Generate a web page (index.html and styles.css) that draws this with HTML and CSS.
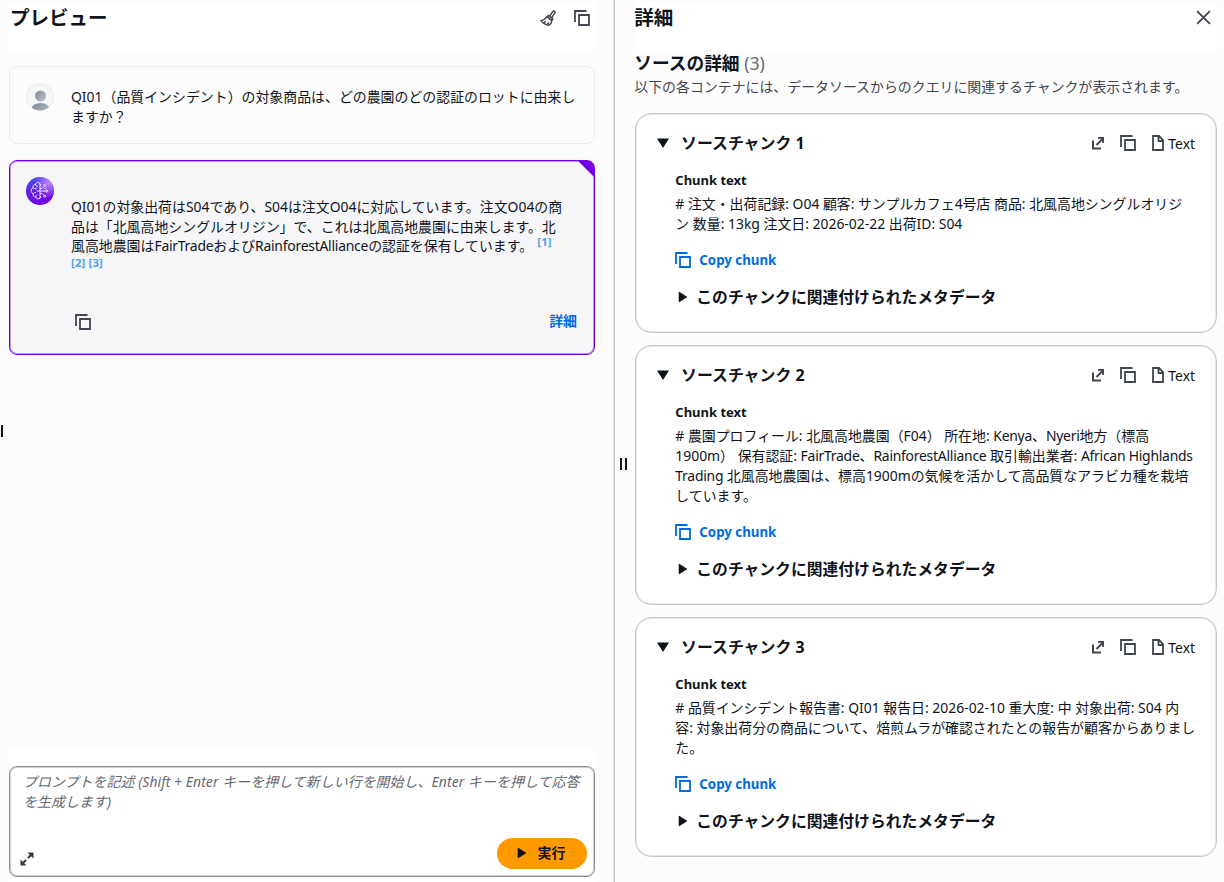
FILE: index.html
```html
<!DOCTYPE html>
<html lang="ja">

<head>
  <meta charset="UTF-8">
  <meta name="viewport" content="width=device-width, initial-scale=1.0">
  <title>プレビュー</title>
  <link rel="stylesheet" href="styles.css">
</head>

<body>
  <!-- 共通アイコン -->
  <svg class="sprite" width="0" height="0">
    <symbol id="copy" viewBox="0 0 16 16">
      <path d="M1 12V1h11.500M5 5h10v10H5z" />
    </symbol>
    <symbol id="external" viewBox="0 0 14 14">
      <path d="M2 4.500v8h8M5.500 9l5.500-5.500" />
      <path d="M7 1h6v6h-1.800V4.300L9.700 2.800H7z" fill="#424650" stroke="none" />
    </symbol>
    <symbol id="file" viewBox="0 0 16 16">
      <path d="M3 1h6l4 4v10H3zM8.500 1v5H13" />
    </symbol>
  </svg>

  <div class="page">
    <section class="preview">
      <header class="panel-head">
        <h1>プレビュー</h1>
        <div class="head-icons">
          <svg class="icon broom" viewBox="0 0 16 16">
            <path d="M14.600 1.300c-.6-.6-1.500-.3-1.900.3L9.600 6.300l2 1.500 3.200-4.900c.4-.6.4-1.200-.2-1.600zM8.500 5.500l4.300 3.200-.9 1.800-5-3.800zM6.900 6.700C5.500 9 3.800 10 1 10.700c1.600 2.500 4.300 4 8 4.500 1.800-1.100 2.700-2.500 2.900-4.700M4.200 12.800l1.600-1.500M7.300 14.500l1.500-2.200" />
          </svg>
          <svg class="icon"><use href="#copy" /></svg>
        </div>
      </header>

      <div class="chat">
        <div class="msg question">
          <svg class="avatar" viewBox="0 0 28 28">
            <defs>
              <linearGradient id="grey" x1="0" y1="0" x2="1" y2="1">
                <stop offset="0" stop-color="#7d8894" />
                <stop offset="1" stop-color="#bcc3ca" />
              </linearGradient>
              <clipPath id="round"><circle cx="14" cy="14" r="13.500" /></clipPath>
            </defs>
            <circle cx="14" cy="14" r="13.500" fill="#f5f6f7" stroke="#ebebf0" />
            <g clip-path="url(#round)" fill="url(#grey)">
              <circle cx="14.500" cy="13" r="5.500" />
              <ellipse cx="14.500" cy="26" rx="9" ry="6" />
            </g>
          </svg>
          <p class="text">
            <span class="line">QI01（品質インシデント）の対象商品は、どの農園のどの認証のロットに由来し</span>
            <span class="line">ますか？</span>
          </p>
        </div>

        <div class="msg answer">
          <svg class="avatar" viewBox="0 0 28 28">
            <defs>
              <linearGradient id="violet" x1="0.600" y1="1" x2="0.300" y2="0">
                <stop offset="0" stop-color="#7300e5" />
                <stop offset="0.400" stop-color="#6a10e5" />
                <stop offset="1" stop-color="#4a4cf0" />
              </linearGradient>
              <radialGradient id="shine" cx="0.850" cy="0.200" r="0.550">
                <stop offset="0" stop-color="#c08cf5" />
                <stop offset="1" stop-color="#c08cf5" stop-opacity="0" />
              </radialGradient>
            </defs>
            <circle cx="14" cy="14" r="14" fill="url(#violet)" />
            <circle cx="14" cy="14" r="14" fill="url(#shine)" />
            <g fill="none" stroke="#f4eaff" stroke-width="1">
              <path d="M14 6.500v15M14 6.500c-1.500-1.700-4-1-4.300.8-2 0-3.200 1.700-2.500 3.400-2.600 1-2.700 5 0 6-.4 2.200.9 3.600 2.700 3.500.6 1.900 2.800 2.300 4.100 1" />
              <path d="M9.700 7.300c0 1.500.8 2.200 2 2.400M7.200 10.700c1 1.300 2.500 1.300 3.500.4M7.200 16.700c.7-1.300 2-1.500 3-.8M9.900 20.200c-.2-1.300.4-2.200 1.600-2.600M10.500 13.700c1 .8 2.300.6 3.500-.3" />
              <path d="M14 11.500h2l2-2M14 14h5.500M14 16.500h2l2 2M18.500 12l1.500-1.500M14 8.500l1.500-.9M14 19.500l1.500.9" />
              <circle cx="18.500" cy="8.500" r="1" />
              <circle cx="20.800" cy="14" r="1.100" />
              <circle cx="18.700" cy="19.200" r="1" />
            </g>
          </svg>
          <div class="answer-body">
            <p class="text">
              <span class="line">QI01の対象出荷はS04であり、S04は注文O04に対応しています。注文O04の商</span>
              <span class="line">品は「北風高地シングルオリジン」で、これは北風高地農園に由来します。北</span>
              <span class="line">風高地農園は<span class="en">FairTrade</span>および<span class="en">RainforestAlliance</span>の認証を保有しています。<a class="cite first">[1]</a></span>
              <span class="line refs"><a class="cite">[2]</a> <a class="cite">[3]</a></span>
            </p>
            <div class="answer-foot">
              <svg class="icon"><use href="#copy" /></svg>
              <a class="link">詳細</a>
            </div>
          </div>
        </div>
      </div>

      <div class="prompt-wrap">
        <div class="prompt">
          <p class="placeholder">
            <span class="line">プロンプトを記述 (Shift + Enter キーを押して新しい行を開始し、Enter キーを押して応答</span>
            <span class="line">を生成します)</span>
          </p>
          <div class="prompt-foot">
            <svg class="expand" viewBox="0 0 16 16">
              <path d="M9 7l4-4M7 9l-4 4" />
              <path class="solid" d="M8.500 1.500h6v6zM1.500 8.500v6h6z" />
            </svg>
            <button class="run"><svg viewBox="0 0 10 12"><path d="M1 1l8 5-8 5z" /></svg>実行</button>
          </div>
        </div>
      </div>
      <i class="edge"></i>
    </section>

    <div class="divider"><i class="grip"></i></div>

    <section class="details">
      <header class="panel-head">
        <h1>詳細</h1>
        <svg class="icon close" viewBox="0 0 16 16"><path d="M2 2l12 12M14 2L2 14" /></svg>
      </header>
      <h2>ソースの詳細 <span>(3)</span></h2>
      <p class="desc">以下の各コンテナには、データソースからのクエリに関連するチャンクが表示されます。</p>

      <div class="chunks">
        <article class="chunk">
          <div class="chunk-head">
            <svg class="caret" viewBox="0 0 14 12"><path d="M1 1.500h12L7 11z" /></svg>
            <h3>ソースチャンク 1</h3>
            <svg class="icon ext"><use href="#external" /></svg>
            <svg class="icon"><use href="#copy" /></svg>
            <svg class="icon file"><use href="#file" /></svg>
            <span class="type">Text</span>
          </div>
          <div class="chunk-body">
            <h4>Chunk text</h4>
            <p class="text">
              <span class="line"># 注文・出荷記録: O04 顧客: サンプルカフェ4号店 商品: 北風高地シングルオリジ</span>
              <span class="line">ン 数量: 13kg 注文日: 2026-02-22 出荷ID: S04</span>
            </p>
            <a class="copy link"><svg class="icon"><use href="#copy" /></svg>Copy chunk</a>
            <div class="meta"><svg viewBox="0 0 10 12"><path d="M1 1l8 5-8 5z" /></svg>このチャンクに関連付けられたメタデータ</div>
          </div>
        </article>

        <article class="chunk">
          <div class="chunk-head">
            <svg class="caret" viewBox="0 0 14 12"><path d="M1 1.500h12L7 11z" /></svg>
            <h3>ソースチャンク 2</h3>
            <svg class="icon ext"><use href="#external" /></svg>
            <svg class="icon"><use href="#copy" /></svg>
            <svg class="icon file"><use href="#file" /></svg>
            <span class="type">Text</span>
          </div>
          <div class="chunk-body">
            <h4>Chunk text</h4>
            <p class="text">
              <span class="line"># 農園プロフィール: 北風高地農園（F04） 所在地: <span class="en">Kenya</span>、<span class="en">Nyeri</span>地方（標高</span>
              <span class="line">1900m） 保有認証: <span class="en">FairTrade</span>、<span class="en">RainforestAlliance</span> 取引輸出業者: <span class="en">African Highlands</span></span>
              <span class="line"><span class="en">Trading</span> 北風高地農園は、標高1900mの気候を活かして高品質なアラビカ種を栽培</span>
              <span class="line">しています。</span>
            </p>
            <a class="copy link"><svg class="icon"><use href="#copy" /></svg>Copy chunk</a>
            <div class="meta"><svg viewBox="0 0 10 12"><path d="M1 1l8 5-8 5z" /></svg>このチャンクに関連付けられたメタデータ</div>
          </div>
        </article>

        <article class="chunk">
          <div class="chunk-head">
            <svg class="caret" viewBox="0 0 14 12"><path d="M1 1.500h12L7 11z" /></svg>
            <h3>ソースチャンク 3</h3>
            <svg class="icon ext"><use href="#external" /></svg>
            <svg class="icon"><use href="#copy" /></svg>
            <svg class="icon file"><use href="#file" /></svg>
            <span class="type">Text</span>
          </div>
          <div class="chunk-body">
            <h4>Chunk text</h4>
            <p class="text">
              <span class="line"># 品質インシデント報告書: QI01 報告日: 2026-02-10 重大度: 中 対象出荷: S04 内</span>
              <span class="line">容: 対象出荷分の商品について、焙煎ムラが確認されたとの報告が顧客からありまし</span>
              <span class="line">た。</span>
            </p>
            <a class="copy link"><svg class="icon"><use href="#copy" /></svg>Copy chunk</a>
            <div class="meta"><svg viewBox="0 0 10 12"><path d="M1 1l8 5-8 5z" /></svg>このチャンクに関連付けられたメタデータ</div>
          </div>
        </article>
      </div>
    </section>
  </div>
</body>

</html>
```
FILE: styles.css
```css
* {
  box-sizing: border-box;
  margin: 0;
  padding: 0;
}

body {
  background: #fcfcfd;
  color: #0f141a;
  font-family: "Noto Sans", "Noto Sans CJK JP", sans-serif;
  font-size: 13.92px;
  line-height: 20px;
  overflow: hidden;
}

.sprite {
  position: absolute;
}

.page {
  display: flex;
  height: 882px;
}

.preview {
  flex: none;
  width: 614px;
  padding: 2px 19px 0 9px;
  display: flex;
  flex-direction: column;
  position: relative;
}

.panel-head {
  height: 48px;
  background: #fff;
  display: flex;
  justify-content: space-between;
  padding-left: 1px;
}

h1 {
  font-size: 19.5px;
  line-height: 32px;
}

.icon {
  width: 16px;
  height: 16px;
  fill: none;
  stroke: #424650;
  stroke-width: 1.8;
  flex: none;
}

.head-icons {
  display: flex;
  gap: 18px;
  padding: 8px 5px 0 0;
}

.broom {
  stroke-width: 1.5;
}

.chat {
  flex: 1;
  padding-top: 16px;
  display: flex;
  flex-direction: column;
  gap: 16px;
}

.msg {
  display: flex;
  border: 1px solid #ebebf0;
  border-radius: 8px;
  padding: 16px;
}

.avatar {
  width: 28px;
  height: 28px;
  flex: none;
  margin-right: 17px;
}

.line {
  display: block;
  white-space: nowrap;
}

.en {
  letter-spacing: -0.24px;
}

.question {
  height: 78px;
}

.question .text {
  padding-top: 4px;
}

.answer {
  height: 195px;
  border-color: #7300e5;
  background: linear-gradient(225deg, #7300e5 11px, #f6f6f9 11.5px);
  box-shadow: inset 0 0 0 1px rgba(115, 0, 229, 0.4);
}

.answer-body {
  flex: 1;
  display: flex;
  flex-direction: column;
  justify-content: space-between;
  padding-top: 20px;
}

.answer .text {
  line-height: 19.5px;
}

.cite {
  color: #539fe5;
  font-size: 11.3px;
  font-weight: 700;
  line-height: 1;
  letter-spacing: 0.2px;
}

.first {
  position: relative;
  top: -5px;
  margin-left: 4px;
}

.answer .refs {
  line-height: 14px;
  font-size: 11.3px;
}

.answer-foot {
  display: flex;
  justify-content: space-between;
  align-items: center;
  padding: 0 1px 7px 4px;
}

.answer-foot .icon {
  position: relative;
  top: 1px;
}

.link {
  color: #006ce0;
  font-weight: 700;
}

.prompt-wrap {
  background: #fff;
  padding: 16px 0 5px;
}

.prompt {
  height: 111px;
  border: 1px solid #8c8c94;
  border-radius: 8px;
  box-shadow: inset 0 0 0 1px rgba(140, 140, 148, 0.4);
  padding: 5px 7px 7px 9px;
  display: flex;
  flex-direction: column;
  justify-content: space-between;
}

.placeholder {
  color: #656871;
  font-style: italic;
  padding-left: 4px;
  letter-spacing: 0.08px;
}

.prompt-foot {
  display: flex;
  justify-content: space-between;
  align-items: flex-end;
}

.expand {
  width: 16px;
  height: 16px;
  margin-bottom: 2px;
  fill: none;
  stroke: #333843;
  stroke-width: 2;
}

.solid {
  fill: #333843;
  stroke: none;
}

.run {
  width: 90px;
  height: 31px;
  border: 0;
  border-radius: 16px;
  background: #ff9900;
  color: #0f141a;
  font: inherit;
  line-height: 18px;
  font-weight: 700;
  display: flex;
  align-items: center;
  justify-content: center;
  gap: 11px;
  padding: 0 2px 1px 0;
}

.run svg,
.meta svg {
  width: 10px;
  height: 12px;
  flex: none;
  fill: #0f141a;
  stroke: #0f141a;
  stroke-width: 0.6;
}

.edge {
  position: absolute;
  left: 1px;
  top: 425px;
  width: 2px;
  height: 12px;
  background: #0f141a;
}

.divider {
  flex: none;
  width: 1px;
  background: #c6c6cd;
  box-shadow: -1px 0 0 rgba(198, 198, 205, 0.5);
  position: relative;
}

.grip {
  position: absolute;
  left: 6px;
  top: 458px;
  width: 7px;
  height: 12px;
  border: solid #0f141a;
  border-width: 0 2px;
}

.details {
  flex: 1;
  min-width: 0;
  padding: 2px 7px 0 20px;
}

.details .panel-head {
  padding: 0 5px 0 0;
}

.details h1,
h2,
.desc {
  text-indent: -0.7px;
}

.close {
  width: 17px;
  height: 17px;
  margin-top: 7px;
}

h2 {
  font-size: 17.7px;
  line-height: 26px;
}

h2 span {
  color: #656871;
  font-weight: 400;
}

.desc {
  color: #424650;
  white-space: nowrap;
  line-height: 22px;
}

.chunks {
  display: flex;
  flex-direction: column;
  gap: 12px;
  padding-top: 15px;
}

.chunk {
  border: 1px solid #c6c6cd;
  border-radius: 16px;
  box-shadow: inset 0 0 0 1px rgba(198, 198, 205, 0.4);
  background: #fff;
  padding: 17px 20px 24px;
}

.chunk-head {
  display: flex;
  align-items: center;
  height: 25px;
}

.caret {
  width: 14px;
  height: 12px;
  margin: 0 11px 1px 0;
  fill: #0f141a;
}

h3 {
  font-size: 15.9px;
  line-height: 24px;
  flex: 1;
  padding-bottom: 1px;
}

.chunk-head .icon {
  margin-bottom: 1px;
}

.chunk-head .ext {
  width: 14px;
  height: 14px;
  margin-right: 15px;
  stroke-width: 2;
}

.chunk-head .file {
  margin: 0 2px 1px 14px;
}

.type {
  padding: 1px 1px 0 0;
  font-size: 13.9px;
}

.chunk-body {
  padding: 14px 0 0 19.3px;
}

h4 {
  font-size: 13px;
  line-height: 20px;
  margin-bottom: 4px;
}

.copy {
  display: flex;
  align-items: center;
  gap: 8px;
  height: 20px;
  margin: 16px 0;
  font-size: 13.3px;
}

.copy .icon {
  stroke: #006ce0;
}

.meta {
  display: flex;
  align-items: center;
  gap: 8px;
  font-size: 15.8px;
  font-weight: 700;
  height: 22px;
  padding-left: 3px;
}
```
